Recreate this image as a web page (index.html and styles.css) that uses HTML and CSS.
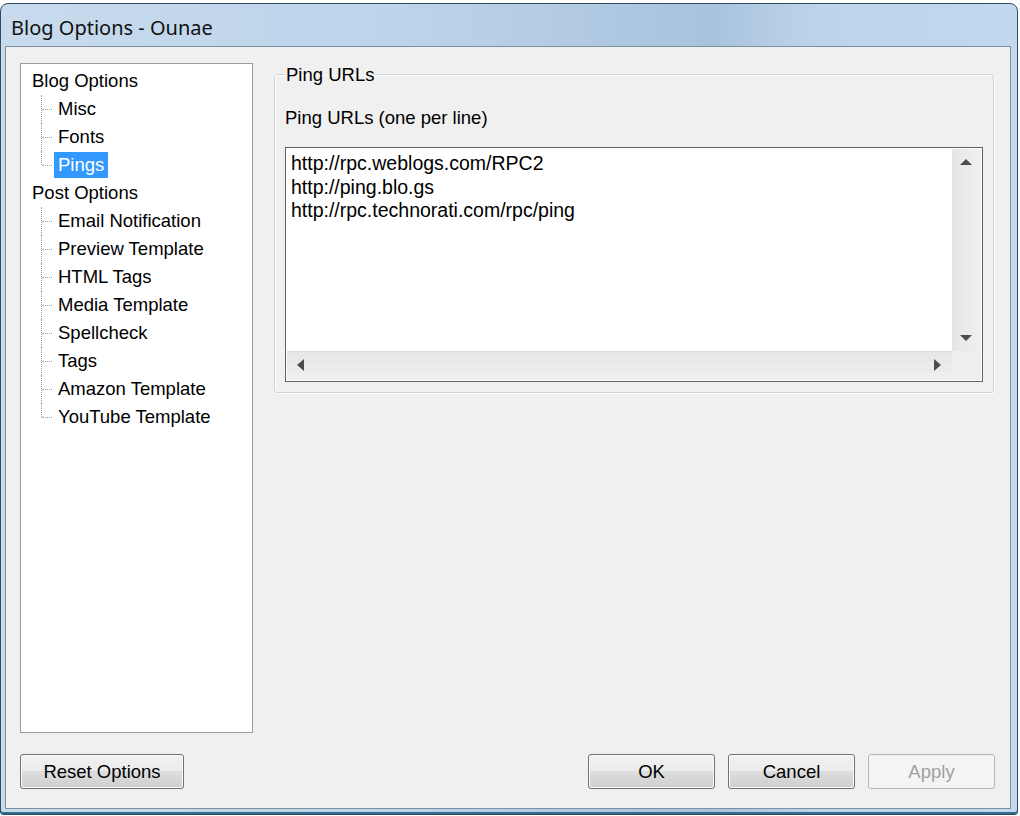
FILE: index.html
```html
<!DOCTYPE html>
<html lang="en">
<head>
    <meta charset="UTF-8">
    <title>Blog Options - Ounae</title>
    <link rel="stylesheet" href="styles.css">
</head>
<body>
    <div class="window">
        <div class="titlebar">Blog Options - Ounae</div>

        <div class="client">
            <div class="main">
                <!-- options tree -->
                <div class="tree">
                    <ul>
                        <li class="node">
                            <span class="label">Blog Options</span>
                            <ul class="children">
                                <li class="child"><span class="label">Misc</span></li>
                                <li class="child"><span class="label">Fonts</span></li>
                                <li class="child"><span class="label selected">Pings</span></li>
                            </ul>
                        </li>
                        <li class="node">
                            <span class="label">Post Options</span>
                            <ul class="children">
                                <li class="child"><span class="label">Email Notification</span></li>
                                <li class="child"><span class="label">Preview Template</span></li>
                                <li class="child"><span class="label">HTML Tags</span></li>
                                <li class="child"><span class="label">Media Template</span></li>
                                <li class="child"><span class="label">Spellcheck</span></li>
                                <li class="child"><span class="label">Tags</span></li>
                                <li class="child"><span class="label">Amazon Template</span></li>
                                <li class="child"><span class="label">YouTube Template</span></li>
                            </ul>
                        </li>
                    </ul>
                </div>

                <!-- ping settings -->
                <fieldset class="group">
                    <legend>Ping URLs</legend>
                    <div class="field-label">Ping URLs (one per line)</div>
                    <div class="urlbox">
                        <div class="urls">
                            <div>http://rpc.weblogs.com/RPC2</div>
                            <div>http://ping.blo.gs</div>
                            <div>http://rpc.technorati.com/rpc/ping</div>
                        </div>
                        <div class="vscroll">
                            <span class="arrow up"></span>
                            <span class="arrow down"></span>
                        </div>
                        <div class="hscroll">
                            <span class="arrow left"></span>
                            <span class="arrow right"></span>
                        </div>
                        <div class="corner"></div>
                    </div>
                </fieldset>
            </div>

            <div class="buttons">
                <button class="btn reset">Reset Options</button>
                <div class="btn-group">
                    <button class="btn">OK</button>
                    <button class="btn">Cancel</button>
                    <button class="btn" disabled>Apply</button>
                </div>
            </div>
        </div>
    </div>
</body>
</html>
```

FILE: styles.css
```css
body {
    margin: 0;
    padding: 3px 0 0 0;
    background-color: #ffffff;
    font-family: "Liberation Sans", Arial, sans-serif;
    font-size: 18.5px;
    color: #000;
}

.window {
    width: 1018px;
    height: 812px;
    box-sizing: border-box;
    border: 1px solid #34495c;
    border-radius: 8px 8px 3px 3px;
    background: linear-gradient(90deg, #c8dbee 0%, #bcd3ea 40%, #a9c3dd 70%, #bcd3ea 80%, #c2d8ee 100%);
    padding: 0 6px 5px 4px;
    display: flex;
    flex-direction: column;
    box-shadow: inset 0 -2px 0 #2f6f8a;
}

.titlebar {
    height: 42px;
    line-height: 47px;
    padding-left: 6px;
    font-family: "Noto Sans", sans-serif;
    font-size: 20px;
    color: #111;
}

.client {
    flex: 1;
    background-color: #f0f0f0;
    border: 1px solid #7f8f9f;
    padding: 16px 15px 19px 14px;
    display: flex;
    flex-direction: column;
}

.main {
    display: flex;
    gap: 21px;
    height: 670px;
}

/* tree view */
.tree {
    width: 233px;
    box-sizing: border-box;
    border: 1px solid #9c9c9c;
    background-color: #fff;
    padding: 3px 0 0 7px;
}

.tree ul {
    list-style: none;
    margin: 0;
    padding: 0;
}

.tree li {
    line-height: 28px;
}

.label {
    display: inline-block;
    line-height: 26px;
    padding: 0 4px;
    margin: 1px 0;
    vertical-align: top;
}

.label.selected {
    background-color: #3399ff;
    color: #fff;
}

.children {
    margin-left: 26px !important;
}

.child {
    position: relative;
}

.child::before {
    content: "";
    position: absolute;
    left: -13px;
    top: 0;
    height: 28px;
    border-left: 1px dotted #a0a0a0;
}

.child:last-child::before {
    height: 14px;
}

.child::after {
    content: "";
    position: absolute;
    left: -12px;
    top: 14px;
    width: 10px;
    border-top: 1px dotted #a0a0a0;
}

/* group box */
.group {
    align-self: flex-start;
    width: 720px;
    box-sizing: border-box;
    margin: -1px 0 0 0;
    padding: 21px 10px 10px 10px;
    border: 1px solid #d3d3d3;
    border-radius: 3px;
    box-shadow: inset 1px 1px 0 #fff, 1px 1px 0 #fff;
}

.group legend {
    padding: 2px 1px 0 1px;
    line-height: 22px;
}

.field-label {
    line-height: 22px;
    margin-bottom: 18px;
}

.urlbox {
    height: 235px;
    box-sizing: border-box;
    border: 1px solid #626262;
    padding: 1px;
    background-color: #fff;
    display: grid;
    grid-template-columns: 1fr 29px;
    grid-template-rows: 1fr 29px;
}

.urls {
    padding: 3px 4px;
    font-size: 19.5px;
    line-height: 23.5px;
}

.vscroll,
.hscroll,
.corner {
    background-color: #eaeaea;
    position: relative;
}

.vscroll {
    border-left: 1px solid #e2e2e2;
    background: linear-gradient(90deg, #e6e6e6, #f0f0f0);
}

.hscroll {
    border-top: 1px solid #dedede;
    background: linear-gradient(180deg, #e6e6e6, #f0f0f0);
}

.corner {
    background-color: #eeeeee;
}

.arrow {
    position: absolute;
    width: 0;
    height: 0;
}

.arrow.up {
    left: 7px;
    top: 10px;
    border-left: 6px solid transparent;
    border-right: 6px solid transparent;
    border-bottom: 6px solid #4d4d4d;
}

.arrow.down {
    left: 7px;
    bottom: 10px;
    border-left: 6px solid transparent;
    border-right: 6px solid transparent;
    border-top: 6px solid #4d4d4d;
}

.arrow.left {
    left: 10px;
    top: 7px;
    border-top: 6px solid transparent;
    border-bottom: 6px solid transparent;
    border-right: 7px solid #4d4d4d;
}

.arrow.right {
    right: 11px;
    top: 7px;
    border-top: 6px solid transparent;
    border-bottom: 6px solid transparent;
    border-left: 7px solid #4d4d4d;
}

/* buttons */
.buttons {
    margin-top: 21px;
    display: flex;
    justify-content: space-between;
}

.btn-group {
    display: flex;
    gap: 13px;
}

.btn {
    width: 127px;
    height: 35px;
    border: 1px solid #707070;
    border-radius: 3px;
    background: linear-gradient(180deg, #f2f2f2 0%, #ebebeb 49%, #dddddd 50%, #cfcfcf 100%);
    box-shadow: inset 0 0 0 1px #fcfcfc;
    font-family: "Liberation Sans", Arial, sans-serif;
    font-size: 18.5px;
    color: #000;
    padding: 0;
}

.btn.reset {
    width: 164px;
}

.btn:disabled {
    border-color: #b5b5b5;
    background: #f4f4f4;
    color: #a0a0a0;
    box-shadow: none;
}
```
